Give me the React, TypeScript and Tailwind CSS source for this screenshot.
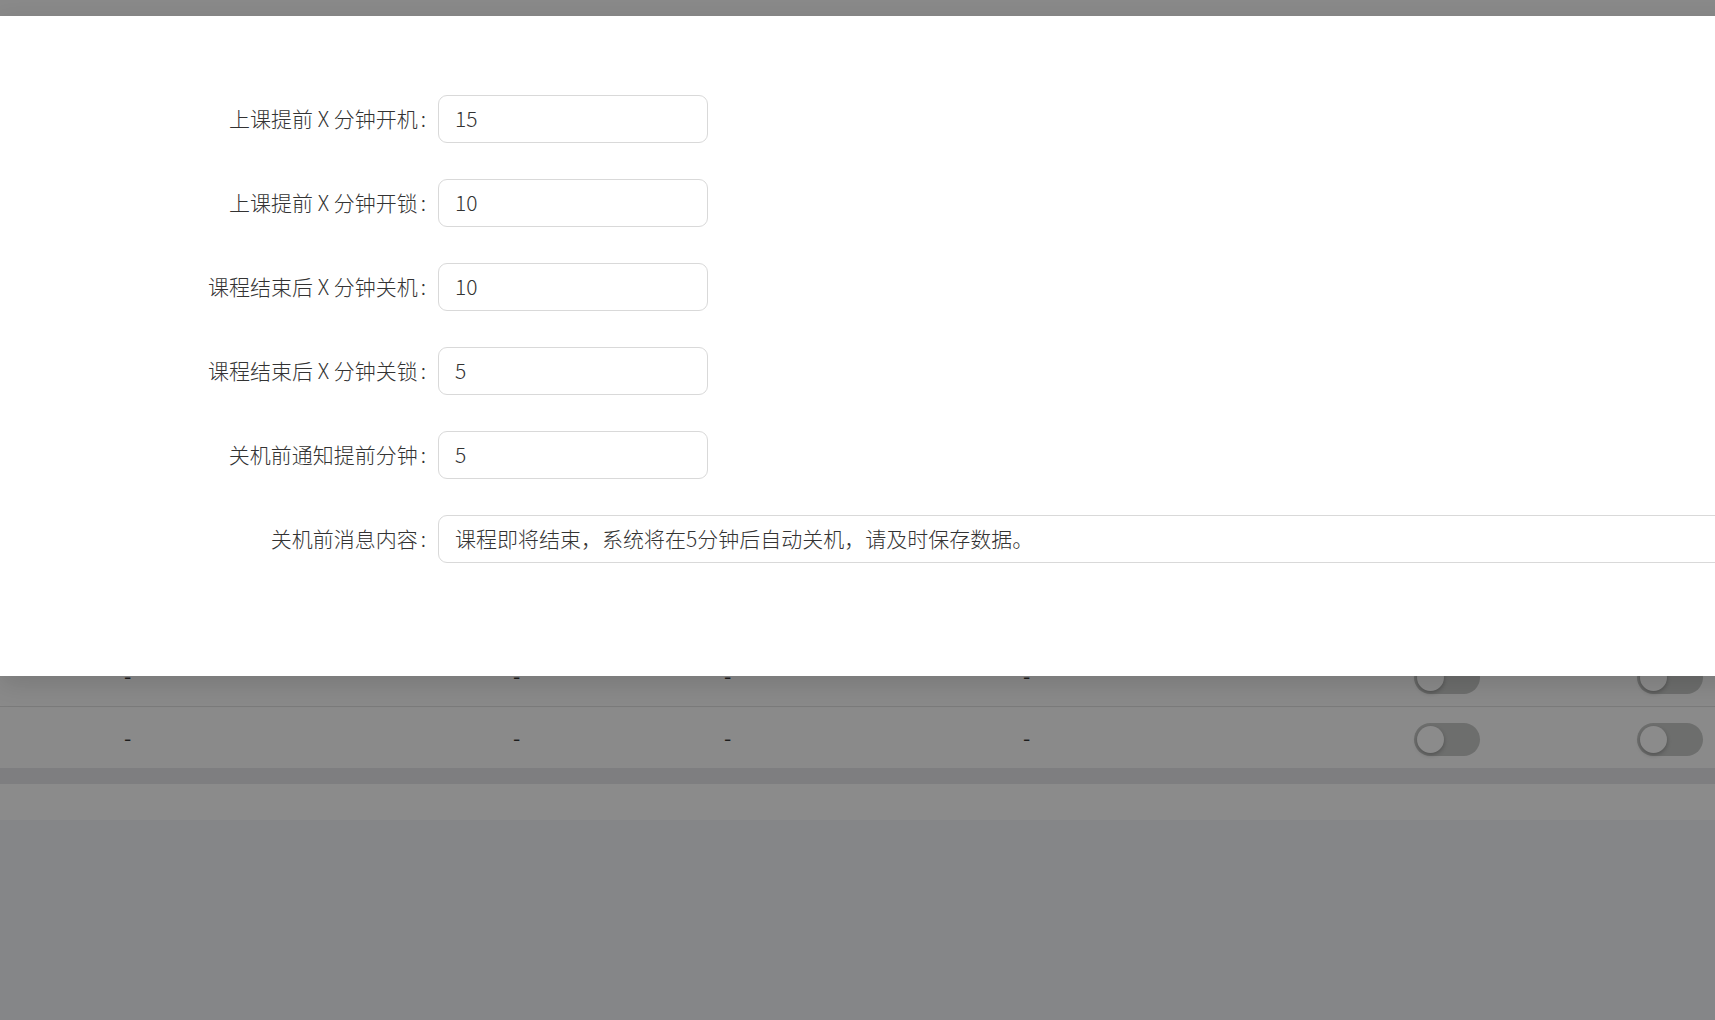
const fields = [
  { label: "上课提前 X 分钟开机", value: "15" },
  { label: "上课提前 X 分钟开锁", value: "10" },
  { label: "课程结束后 X 分钟关机", value: "10" },
  { label: "课程结束后 X 分钟关锁", value: "5" },
  { label: "关机前通知提前分钟", value: "5" },
];

const message = "课程即将结束，系统将在5分钟后自动关机，请及时保存数据。";

function Toggle() {
  return (
    <div className="mt-[3px] flex h-[33px] w-[66px] items-center rounded-full bg-[#6d6e6d] pl-[3px]">
      <div className="h-[27px] w-[27px] rounded-full bg-[#8b8b8b] shadow-[0_2px_4px_rgba(0,0,0,0.25)]" />
    </div>
  );
}

function TableRow({ bordered }: { bordered?: boolean }) {
  return (
    <div
      className={
        "grid h-[61px] grid-cols-[124px_389px_211px_299px_391px_223px_1fr] items-center bg-[#8a8a8a] text-[21px] text-[#1c1c1c] " +
        (bordered ? "border-b border-[#7b7b7b]" : "")
      }
    >
      <div />
      <div>-</div>
      <div>-</div>
      <div>-</div>
      <div>-</div>
      <div>
        <Toggle />
      </div>
      <div>
        <Toggle />
      </div>
    </div>
  );
}

function FormRow({ label, children }: { label: string; children: React.ReactNode }) {
  return (
    <div className="flex h-[48px] items-center">
      <div className="flex w-[438px] shrink-0 justify-end pr-[12px] text-[21px] font-light text-[#333]">
        <span>{label}</span>
        <span className="ml-[3px]">:</span>
      </div>
      {children}
    </div>
  );
}

export default function App() {
  return (
    <div
      className="relative h-[1020px] w-[1715px] overflow-hidden bg-[#858688]"
      style={{ fontFamily: '"Noto Sans CJK SC", "Noto Sans", sans-serif' }}
    >
      {/* page behind the mask */}
      <div className="h-[16px] bg-[#898989]" />
      <div className="h-[630px] bg-[#8a8a8a]" />
      <TableRow bordered />
      <TableRow />
      <div className="h-[16px] bg-[#7e7e80]" />
      <div className="h-[36px] bg-[#8b8b8b]" />

      {/* modal */}
      <div className="absolute left-0 top-[16px] h-[660px] w-[1800px] bg-white pt-[79px] shadow-[0_9px_24px_rgba(0,0,0,0.12)]">
        <div className="flex flex-col gap-[36px]">
          {fields.map((f) => (
            <FormRow key={f.label} label={f.label}>
              <div className="flex h-[48px] w-[270px] items-center rounded-[9px] border border-[#d9d9d9] px-[16px] text-[21px] font-light text-[#333]">
                {f.value}
              </div>
            </FormRow>
          ))}
          <FormRow label="关机前消息内容">
            <div className="flex h-[48px] w-[1400px] items-center rounded-[9px] border border-[#d9d9d9] px-[16px] text-[21px] font-light text-[#333]">
              {message}
            </div>
          </FormRow>
        </div>
      </div>
    </div>
  );
}
